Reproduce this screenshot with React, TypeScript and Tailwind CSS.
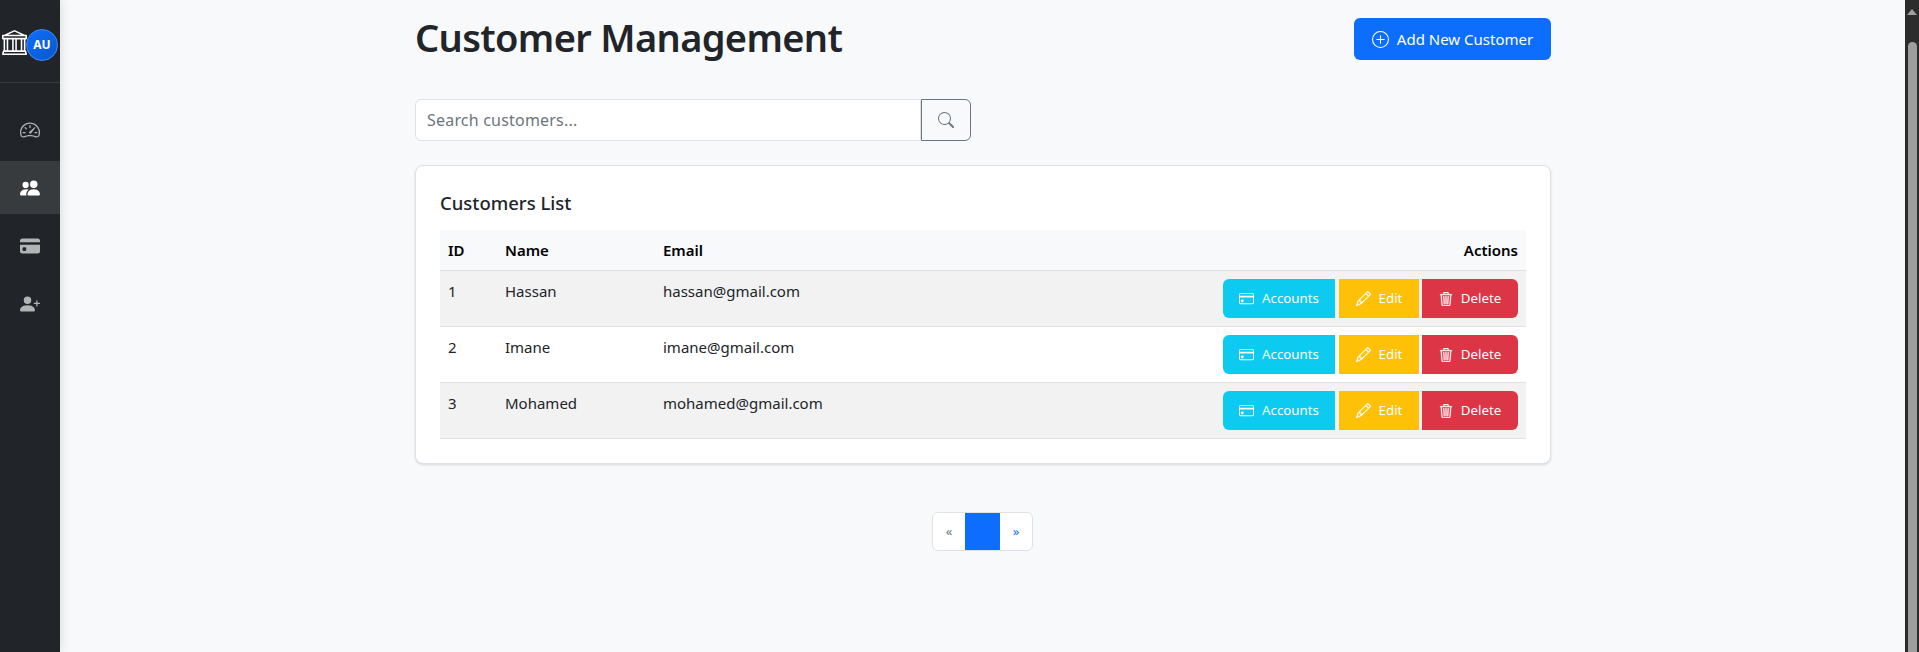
import { BsBank, BsCreditCard, BsCreditCardFill, BsPencil, BsPeopleFill, BsPersonPlusFill, BsPlusCircle, BsSearch, BsSpeedometer2, BsTrash3 } from 'react-icons/bs'
import type { ReactNode } from 'react'

const customers = [
  { id: 1, name: 'Hassan', email: 'hassan@gmail.com' },
  { id: 2, name: 'Imane', email: 'imane@gmail.com' },
  { id: 3, name: 'Mohamed', email: 'mohamed@gmail.com' },
]

function NavItem({ active, children }: { active?: boolean; children: ReactNode }) {
  return (
    <div className={`flex h-[53px] items-center justify-center text-[20px] ${active ? 'bg-white/10 text-white' : 'text-white/65'}`}>
      {children}
    </div>
  )
}

function Sidebar() {
  return (
    <aside className="flex w-[60px] shrink-0 flex-col bg-[#212529] shadow-[2px_0_10px_rgba(0,0,0,0.1)]">
      <div className="flex h-[83px] items-start border-b border-white/10 pl-[2px] pt-[29px]">
        <BsBank className="mt-[1px] text-[25px] text-white" />
        <div className="-ml-[1px] flex h-8 w-8 items-center justify-center rounded-full border border-[#3d8bfd] bg-[linear-gradient(135deg,#0d6efd,#0a58ca)] text-[12px] font-bold text-white">
          AU
        </div>
      </div>
      <nav className="mt-[20px] flex flex-col gap-[5px]">
        <NavItem><BsSpeedometer2 /></NavItem>
        <NavItem active><BsPeopleFill /></NavItem>
        <NavItem><BsCreditCardFill /></NavItem>
        <NavItem><BsPersonPlusFill /></NavItem>
      </nav>
    </aside>
  )
}

function Scrollbar() {
  return (
    <div className="flex w-[14px] shrink-0 flex-col items-center bg-[#2c2c2c] pt-[9px]">
      <div className="h-0 w-0 border-x-[5px] border-b-[6px] border-x-transparent border-b-[#a0a0a0]" />
      <div className="mt-[27px] w-[9px] flex-1 rounded-t-[5px] bg-[#9e9e9e]" />
    </div>
  )
}

function ActionButton({ color, className, icon, label }: { color: string; className: string; icon: ReactNode; label: string }) {
  return (
    <button className={`flex h-[39px] items-center justify-center gap-[8px] pt-[1px] text-[13.3px] text-white ${color} ${className}`}>
      <span className="text-[15px]">{icon}</span>
      {label}
    </button>
  )
}

export default function App() {
  return (
    <div className="flex h-screen overflow-hidden bg-[#f8f9fa] font-['Noto_Sans',sans-serif] text-[#212529]">
      <Sidebar />
      <main className="flex-1 pl-[355px] pr-[354px]">
        <div className="flex h-[99px] items-start justify-between">
          <h1 className="mt-[12px] text-[38px] leading-[50px] font-semibold tracking-[-0.65px]">Customer Management</h1>
          <button className="mt-[18px] flex h-[42px] w-[197px] items-center justify-center gap-[8px] rounded-md bg-[#0d6efd] text-[15px] text-white">
            <BsPlusCircle className="text-[17px]" />
            Add New Customer
          </button>
        </div>

        <div className="flex h-[42px] w-[556px]">
          <div className="flex flex-1 items-center rounded-l-md border border-[#dee2e6] bg-white px-[11px] text-[16px] tracking-[0.2px] text-[#6c757d]">
            Search customers...
          </div>
          <button className="flex w-[50px] items-center justify-center rounded-r-md border border-[#6c757d] text-[16px] text-[#6c757d]">
            <BsSearch />
          </button>
        </div>

        <section className="mt-[24px] h-[299px] rounded-lg border border-[#dee2e6] bg-white px-6 pt-[23px] shadow-sm">
          <h2 className="text-[18.5px] leading-[28px] font-medium">Customers List</h2>
          <table className="mt-[13px] w-full text-[15px]">
            <thead>
              <tr className="h-[40px] border-b border-[#dee2e6] bg-[#f8f9fa] text-left text-black">
                <th className="w-[57px] pl-2 font-semibold">ID</th>
                <th className="w-[158px] pl-2 font-semibold">Name</th>
                <th className="pl-2 font-semibold">Email</th>
                <th className="pr-2 text-right font-semibold">Actions</th>
              </tr>
            </thead>
            <tbody>
              {customers.map((c) => (
                <tr key={c.id} className={`border-b border-[#dee2e6] ${c.id % 2 === 1 ? 'bg-[#f2f2f2]' : 'bg-white'}`}>
                  <td className="h-[56px] pl-2 pt-[8px] align-top leading-[24px]">{c.id}</td>
                  <td className="pl-2 pt-[8px] align-top leading-[24px]">{c.name}</td>
                  <td className="pl-2 pt-[8px] align-top leading-[24px]">{c.email}</td>
                  <td className="pr-2 pt-[8px] align-top">
                    <div className="flex justify-end">
                      <ActionButton color="bg-[#0dcaf0]" className="w-[112px] rounded-l-md" icon={<BsCreditCard />} label="Accounts" />
                      <ActionButton color="bg-[#ffc107]" className="ml-[4px] w-[80px]" icon={<BsPencil strokeWidth={0.3} stroke="currentColor" />} label="Edit" />
                      <ActionButton color="bg-[#dc3545]" className="ml-[3px] w-[96px] rounded-r-md" icon={<BsTrash3 size={14} strokeWidth={0.4} stroke="currentColor" />} label="Delete" />
                    </div>
                  </td>
                </tr>
              ))}
            </tbody>
          </table>
        </section>

        <div className="mr-[1px] mt-[48px] flex justify-center">
          <div className="flex h-[39px] w-[101px] overflow-hidden rounded-md border border-[#dee2e6] bg-white text-[13px] text-[#0d6efd]">
            <span className="flex flex-1 items-center justify-center text-[#6c757d]">«</span>
            <span className="w-[35px] bg-[#0d6efd]" />
            <span className="flex flex-1 items-center justify-center">»</span>
          </div>
        </div>
      </main>
      <Scrollbar />
    </div>
  )
}
